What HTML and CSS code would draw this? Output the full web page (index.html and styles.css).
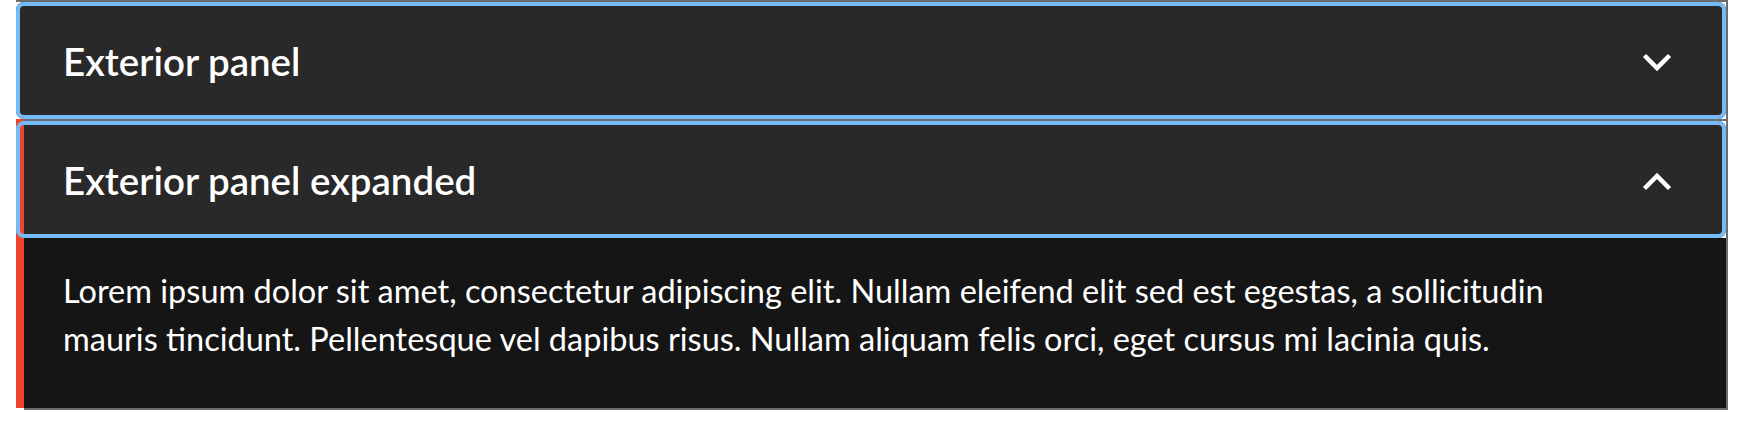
FILE: index.html
```html
<!DOCTYPE html>
<html lang="en">
<head>
<meta charset="utf-8">
<title>Accordion</title>
<link rel="stylesheet" href="styles.css">
</head>
<body>
<div class="accordion">
  <div class="item">
    <button class="toggle" type="button" aria-expanded="false">
      <span class="toggle-text">Exterior panel</span>
      <svg class="chev" viewBox="0 0 30 19" width="30" height="19" aria-hidden="true"><polyline points="2.5,2.5 15,15 27.5,2.5" fill="none" stroke="#fff" stroke-width="4.5"/></svg>
    </button>
  </div>
  <div class="item expanded">
    <button class="toggle" type="button" aria-expanded="true">
      <span class="toggle-text">Exterior panel expanded</span>
      <svg class="chev" viewBox="0 0 30 19" width="30" height="19" aria-hidden="true"><polyline points="2.5,16.5 15,4 27.5,16.5" fill="none" stroke="#fff" stroke-width="4.5"/></svg>
    </button>
    <div class="content">
      <p class="body">Lorem ipsum dolor sit amet, consectetur adipiscing elit. Nullam eleifend elit sed est egestas, a sollicitudin mauris tincidunt. Pellentesque vel dapibus risus. Nullam aliquam felis orci, eget cursus mi lacinia quis.</p>
    </div>
  </div>
</div>
</body>
</html>
```
FILE: styles.css
```css
html, body { margin: 0; padding: 0; background: #fff; }
body { padding: 0 16px; }
.accordion {
  border-top: 2px solid #6a6e73;
  border-right: 2px solid #6a6e73;
}
.item { position: relative; }
.item:first-child { border-bottom: 2px solid #6a6e73; }
.toggle {
  position: relative;
  display: flex;
  align-items: center;
  justify-content: space-between;
  width: 100%;
  height: 117px;
  margin: 0;
  padding: 0 54px 0 47px;
  border: 0;
  border-radius: 8px;
  background: #292929;
  color: #fff;
  font-family: Lato, "Noto Sans", sans-serif;
  font-size: 38.5px;
  font-weight: 600;
  text-align: left;
  cursor: pointer;
}
.toggle::after {
  content: "";
  position: absolute;
  inset: 0;
  border: 4px solid #73bcf7;
  border-radius: 8px;
  pointer-events: none;
  z-index: 2;
}
.chev { display: block; margin-top: 3px; }
.expanded::before {
  content: "";
  position: absolute;
  left: 0;
  top: -2px;
  bottom: 2px;
  width: 8px;
  background: #f0442c;
  z-index: 1;
}
.content {
  margin-left: 8px;
  padding: 29px 110px 45px 39px;
  background: #151515;
  border-bottom: 2px solid #6a6e73;
}
.body {
  margin: 0;
  color: #fff;
  font-family: Lato, "Noto Sans", sans-serif;
  font-size: 32.5px;
  line-height: 48px;
}
```
